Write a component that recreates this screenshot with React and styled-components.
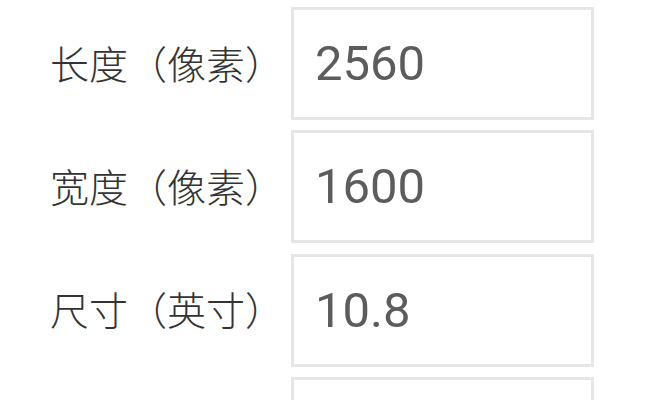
import React from 'react';
import styled, { createGlobalStyle } from 'styled-components';

const Global = createGlobalStyle`
  html, body {
    margin: 0;
    padding: 0;
    background: #ffffff;
    overflow: hidden;
  }
`;

const Page = styled.div`
  width: 667px;
  height: 400px;
  overflow: hidden;
  padding: 7px 0 0 50px;
  box-sizing: border-box;
  display: flex;
  flex-direction: column;
  gap: 10.3px;
`;

const Row = styled.div`
  display: flex;
  align-items: center;
  flex-shrink: 0;
`;

const Label = styled.div`
  width: 241px;
  font-family: "Noto Sans CJK SC", "Noto Sans", sans-serif;
  font-size: 39px;
  font-weight: 300;
  color: #333333;
  white-space: nowrap;
  margin-top: -4px;
`;

const Field = styled.div`
  width: 303px;
  height: 113px;
  box-sizing: border-box;
  border: 3px solid #e6e6e6;
  display: flex;
  align-items: center;
  padding-left: 21px;
  font-family: Roboto, "Liberation Sans", sans-serif;
  font-size: 49px;
  color: #5c5c5c;
`;

const rows = [
  { label: '长度（像素）', value: '2560' },
  { label: '宽度（像素）', value: '1600' },
  { label: '尺寸（英寸）', value: '10.8' },
  { label: '', value: '' },
];

export default function App() {
  return (
    <>
      <Global />
      <Page>
        {rows.map((r, i) => (
          <Row key={i}>
            <Label>{r.label}</Label>
            <Field>{r.value}</Field>
          </Row>
        ))}
      </Page>
    </>
  );
}
